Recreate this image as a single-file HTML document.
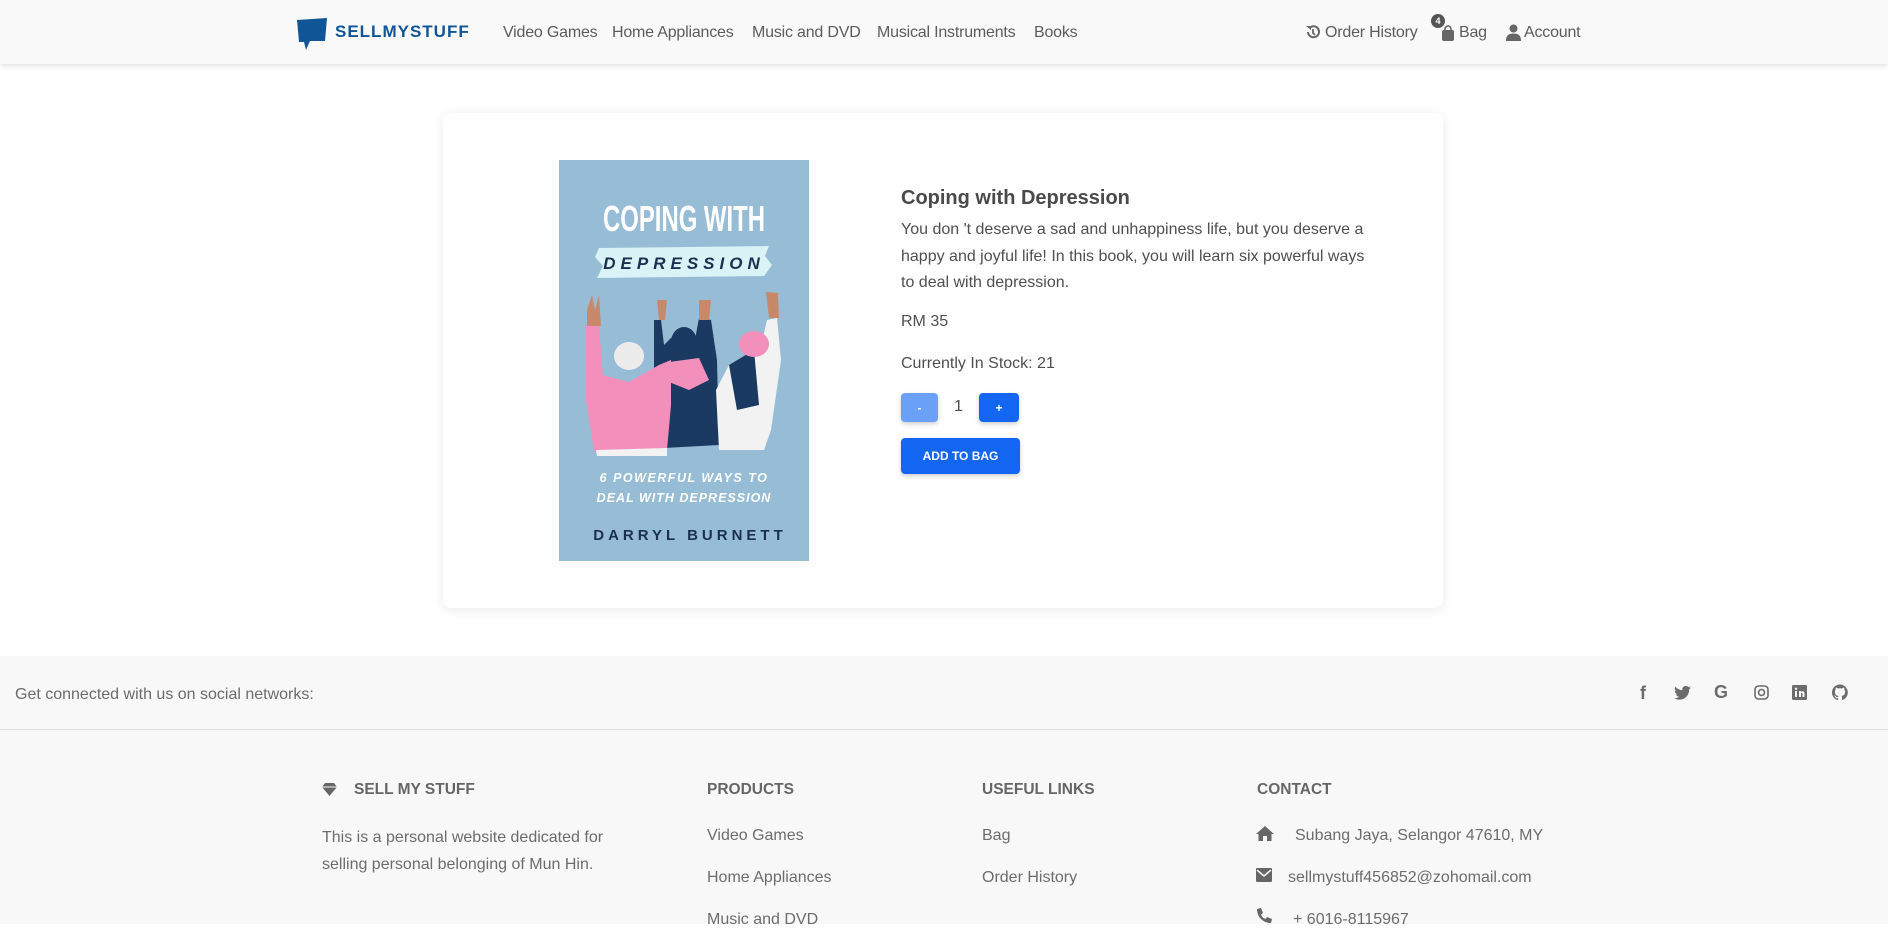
<!DOCTYPE html>
<html><head><meta charset="utf-8">
<style>
*{margin:0;padding:0;box-sizing:border-box}
body{width:1888px;height:924px;overflow:hidden;background:#fff;font-family:"Liberation Sans",sans-serif;color:#4f4f4f;position:relative}
.abs{position:absolute;white-space:nowrap}
.nav{position:absolute;left:0;top:0;width:1888px;height:64px;background:#f9f9f9;box-shadow:0 2px 5px rgba(0,0,0,.12)}
.nav .l{position:absolute;top:24px;font-size:16px;color:#5c5c5c;letter-spacing:-0.2px}
.card{position:absolute;left:443px;top:113px;width:1000px;height:495px;background:#fff;border-radius:8px;box-shadow:0 2px 12px rgba(0,0,0,.09)}
.btn{position:absolute;border-radius:4px;color:#fff;font-size:12px;font-weight:bold;display:flex;align-items:center;justify-content:center;box-shadow:0 2px 5px rgba(0,0,0,.2)}
.foot{position:absolute;left:0;top:656px;width:1888px;height:268px;background:#f8f8f8;color:#6c6c6c}
.foot .t{position:absolute;font-size:16px;white-space:nowrap}
.foot .h{position:absolute;font-size:15.5px;font-weight:bold;color:#666;white-space:nowrap}
</style></head><body>
<div class="nav">
  <svg class="abs" style="left:296px;top:18px" width="34" height="32" viewBox="0 0 34 32"><path d="M1 2 L31 0 L29 23 L14 23 L10 32 L8 24 L3 24 Z" fill="#105596"/></svg>
  <div class="abs" style="left:335px;top:22px;font-size:17px;font-weight:bold;color:#105596;letter-spacing:1px">SELLMYSTUFF</div>
  <div class="l" style="left:503px">Video Games</div>
  <div class="l" style="left:612px">Home Appliances</div>
  <div class="l" style="left:752px">Music and DVD</div>
  <div class="l" style="left:877px">Musical Instruments</div>
  <div class="l" style="left:1034px">Books</div>
  <svg class="abs" style="left:1305px;top:24px" width="16" height="16" viewBox="0 0 16 16"><path d="M3 8 A5.5 5.5 0 1 0 5 3.5" fill="none" stroke="#666" stroke-width="2"/><path d="M1 2 L6 2 L6 6 Z" fill="#666"/><path d="M8 5 V9 L10 11" fill="none" stroke="#666" stroke-width="1.8"/></svg>
  <div class="l" style="left:1325px">Order History</div>
  <div class="abs" style="left:1431px;top:14px;width:14px;height:14px;border-radius:7px;background:#555;color:#fff;font-size:9px;font-weight:bold;text-align:center;line-height:14px">4</div>
  <svg class="abs" style="left:1441px;top:25px" width="14" height="16" viewBox="0 0 14 16"><path d="M4 6 V4 a3 3 0 0 1 6 0 V6" fill="none" stroke="#666" stroke-width="1.6"/><rect x="1" y="5" width="12" height="11" rx="2" fill="#666"/></svg>
  <div class="l" style="left:1459px">Bag</div>
  <svg class="abs" style="left:1506px;top:24px" width="15" height="17" viewBox="0 0 15 17"><circle cx="7.5" cy="4.5" r="4" fill="#666"/><path d="M0 17 C0 11 3 9.5 7.5 9.5 C12 9.5 15 11 15 17 Z" fill="#666"/></svg>
  <div class="l" style="left:1524px">Account</div>
</div>

<div class="card"></div>
<svg class="abs" style="left:559px;top:160px" width="250" height="401" viewBox="0 0 250 401">
  <rect width="250" height="401" fill="#97bdd6"/>
  <text x="125" y="71" text-anchor="middle" font-family="Liberation Sans Narrow, Liberation Sans, sans-serif" font-weight="bold" font-size="36" fill="#fff" textLength="162" lengthAdjust="spacingAndGlyphs">COPING WITH</text>
  <path d="M40 88 L210 86 L206 96 L213 105 L205 116 L38 118 L44 106 L36 97 Z" fill="#d9f3f6"/>
  <text x="125" y="109" text-anchor="middle" font-family="Liberation Sans, sans-serif" font-weight="bold" font-style="italic" font-size="17" fill="#1b2f4f" letter-spacing="5">DEPRESSION</text>
  <!-- navy middle person -->
  <path d="M95 160 L102 160 L105 185 L120 170 L130 176 L135 185 L140 158 L152 160 L158 200 L160 285 L105 288 L95 250 Z" fill="#1b3a62"/>
  <ellipse cx="125" cy="182" rx="13" ry="15" fill="#1b3a62"/>
  <path d="M110 202 L140 198 L150 220 L130 230 L110 222 Z" fill="#f28fbb"/>
  <!-- white person -->
  <path d="M160 290 L157 230 L170 205 L200 195 L208 160 L218 158 L222 200 L212 270 L205 290 Z" fill="#f2f2f2"/>
  <path d="M170 205 L195 190 L200 245 L178 250 Z" fill="#1b3a62"/>
  <ellipse cx="195" cy="184" rx="15" ry="13" fill="#f28fbb"/>
  <!-- pink person -->
  <path d="M27 166 L40 166 L44 215 L70 222 L100 205 L112 200 L112 245 L108 290 L35 292 L27 240 Z" fill="#f28fbb"/>
  <ellipse cx="70" cy="196" rx="15" ry="14" fill="#ececec"/>
  <path d="M37 290 L108 288 L108 296 L38 296Z" fill="#f2f2f2"/>
  <!-- hands -->
  <path d="M28 150 L33 135 L36 150 L40 135 L42 166 L28 166Z" fill="#c8896a"/>
  <path d="M98 140 L100 160 L106 160 L108 140Z" fill="#c8896a"/>
  <path d="M140 140 L140 160 L150 160 L152 140Z" fill="#c8896a"/>
  <path d="M207 132 L210 158 L220 158 L219 133Z" fill="#c8896a"/>
  <text x="125" y="322" text-anchor="middle" font-family="Liberation Sans, sans-serif" font-weight="bold" font-style="italic" font-size="12.5" fill="#fff" letter-spacing="1.5">6 POWERFUL WAYS TO</text>
  <text x="125" y="342" text-anchor="middle" font-family="Liberation Sans, sans-serif" font-weight="bold" font-style="italic" font-size="12.5" fill="#fff" letter-spacing="1">DEAL WITH DEPRESSION</text>
  <text x="131" y="380" text-anchor="middle" font-family="Liberation Sans, sans-serif" font-weight="bold" font-size="15" fill="#1b2f4f" letter-spacing="4">DARRYL BURNETT</text>
</svg>

<div class="abs" style="left:901px;top:187px;font-size:20px;font-weight:bold;color:#4a4a4a">Coping with Depression</div>
<div class="abs" style="left:901px;top:217px;font-size:16px;line-height:26.5px;white-space:normal;width:480px">You don 't deserve a sad and unhappiness life, but you deserve a happy and joyful life! In this book, you will learn six powerful ways to deal with depression.</div>
<div class="abs" style="left:901px;top:313px;font-size:16px">RM 35</div>
<div class="abs" style="left:901px;top:355px;font-size:16px">Currently In Stock: 21</div>
<div class="btn" style="left:901px;top:393px;width:37px;height:29px;background:#6aa1f6">-</div>
<div class="abs" style="left:954px;top:398px;font-size:16px">1</div>
<div class="btn" style="left:979px;top:393px;width:40px;height:29px;background:#1266f1">+</div>
<div class="btn" style="left:901px;top:438px;width:119px;height:36px;background:#1266f1">ADD TO BAG</div>

<div class="foot">
  <div class="t" style="left:15px;top:30px">Get connected with us on social networks:</div>
  <div class="abs" style="left:1640px;top:27px;font-size:18px;font-weight:bold;color:#6c6c6c">f</div>
  <svg class="abs" style="left:1674px;top:30px" width="17" height="14" viewBox="0 0 24 20"><path d="M24 2.4a10 10 0 0 1-2.8.8A5 5 0 0 0 23.3.4a10 10 0 0 1-3.1 1.2A4.9 4.9 0 0 0 11.8 6 14 14 0 0 1 1.7.9a4.9 4.9 0 0 0 1.5 6.6A4.9 4.9 0 0 1 1 6.9a4.9 4.9 0 0 0 3.9 4.8 5 5 0 0 1-2.2.1 4.9 4.9 0 0 0 4.6 3.4A9.9 9.9 0 0 1 0 17.3 14 14 0 0 0 7.5 19.5c9 0 14-7.5 14-14v-.6A10 10 0 0 0 24 2.4z" fill="#6c6c6c"/></svg>
  <div class="abs" style="left:1714px;top:26px;font-size:18px;font-weight:bold;color:#6c6c6c">G</div>
  <svg class="abs" style="left:1754px;top:29px" width="15" height="15" viewBox="0 0 15 15"><rect x="1" y="1" width="13" height="13" rx="3.5" fill="none" stroke="#6c6c6c" stroke-width="1.6"/><circle cx="7.5" cy="7.5" r="3" fill="none" stroke="#6c6c6c" stroke-width="1.6"/></svg>
  <svg class="abs" style="left:1792px;top:29px" width="15" height="15" viewBox="0 0 15 15"><rect width="15" height="15" rx="1.5" fill="#6c6c6c"/><rect x="3" y="6" width="2" height="6" fill="#f8f8f8"/><circle cx="4" cy="3.8" r="1.2" fill="#f8f8f8"/><path d="M7 6h2v1c.5-1 3.5-1.5 3.5 1.5V12h-2V9c0-1.5-1.5-1.5-1.5 0v3H7z" fill="#f8f8f8"/></svg>
  <svg class="abs" style="left:1832px;top:28px" width="16" height="17" viewBox="0 0 16 16"><path d="M8 0a8 8 0 0 0-2.5 15.6c.4 0 .5-.2.5-.4v-1.5c-2.2.5-2.7-1-2.700-1-.4-.9-.9-1.2-.9-1.2-.7-.5.1-.5.1-.5.8.1 1.2.8 1.2.8.7 1.2 1.9.9 2.3.7.1-.5.3-.9.5-1.1-1.8-.2-3.6-.9-3.6-4 0-.9.3-1.6.8-2.1-.1-.2-.4-1 .1-2.1 0 0 .7-.2 2.2.8a7.5 7.5 0 0 1 4 0c1.5-1 2.2-.8 2.2-.8.4 1.1.2 1.9.1 2.1.5.6.8 1.3.8 2.1 0 3.1-1.900 3.8-3.600 4 .3.3.5.8.5 1.5v2.2c0 .2.1.5.6.4A8 8 0 0 0 8 0z" fill="#6c6c6c"/></svg>
  <div class="abs" style="left:0;top:73px;width:1888px;height:1px;background:#e0e0e0"></div>

  <svg class="abs" style="left:322px;top:127px" width="15" height="13" viewBox="0 0 15 13"><path d="M3 0h9l3 4-7.5 9L0 4z" fill="#666"/><path d="M0 4h15" stroke="#f8f8f8" stroke-width="1"/></svg>
  <div class="h" style="left:354px;top:125px">SELL MY STUFF</div>
  <div class="t" style="left:322px;top:169px;line-height:26.5px">This is a personal website dedicated for<br>selling personal belonging of Mun Hin.</div>
  <div class="h" style="left:707px;top:125px">PRODUCTS</div>
  <div class="t" style="left:707px;top:171px">Video Games</div>
  <div class="t" style="left:707px;top:213px">Home Appliances</div>
  <div class="t" style="left:707px;top:255px">Music and DVD</div>
  <div class="h" style="left:982px;top:125px">USEFUL LINKS</div>
  <div class="t" style="left:982px;top:171px">Bag</div>
  <div class="t" style="left:982px;top:213px">Order History</div>
  <div class="h" style="left:1257px;top:125px">CONTACT</div>
  <svg class="abs" style="left:1256px;top:170px" width="18" height="15" viewBox="0 0 18 15"><path d="M9 0 L18 8 H15.5 V15 H11 V10 H7 V15 H2.5 V8 H0 Z" fill="#666"/></svg>
  <div class="t" style="left:1295px;top:171px">Subang Jaya, Selangor 47610, MY</div>
  <svg class="abs" style="left:1256px;top:212px" width="16" height="14" viewBox="0 0 16 14"><rect width="16" height="14" rx="1" fill="#666"/><path d="M1 2 L8 8 L15 2" fill="none" stroke="#f8f8f8" stroke-width="1.5"/></svg>
  <div class="t" style="left:1288px;top:213px">sellmystuff456852@zohomail.com</div>
  <svg class="abs" style="left:1256px;top:252px" width="16" height="16" viewBox="0 0 16 16"><path d="M1 1 L5 0 L7 5 L5 6.5 C6 9 7 10 9.5 11 L11 9 L16 11 L15 15 C7 15 1 9 1 1Z" fill="#666"/></svg>
  <div class="t" style="left:1293px;top:255px">+ 6016-8115967</div>
</div>
</body></html>
